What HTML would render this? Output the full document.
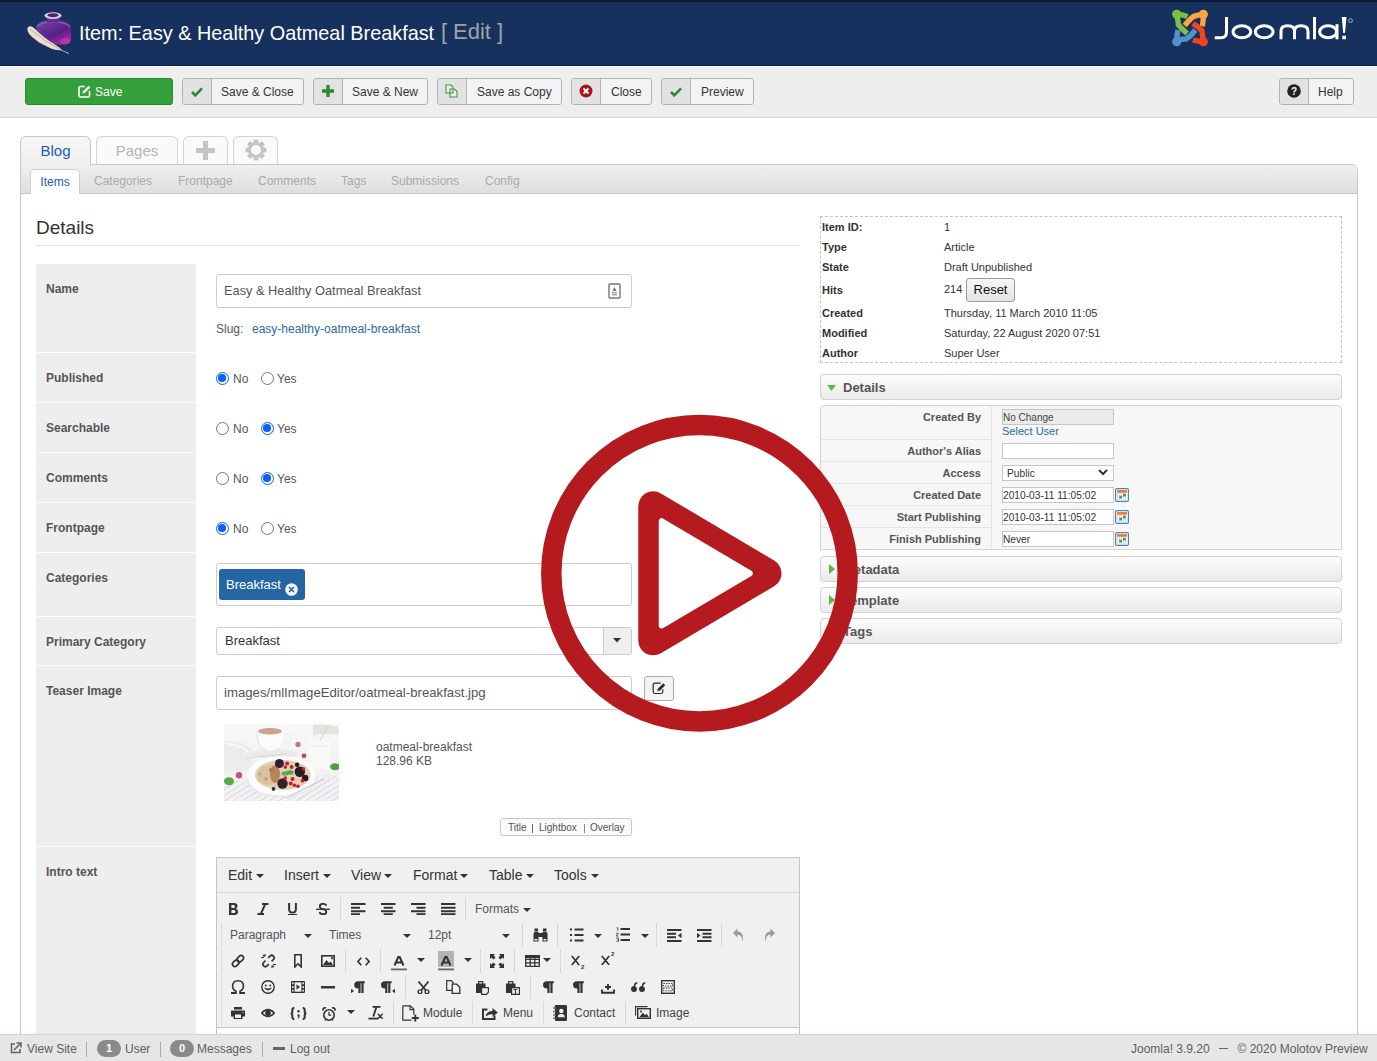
<!DOCTYPE html>
<html><head><meta charset="utf-8">
<style>
*{box-sizing:border-box;margin:0;padding:0}
html,body{width:1377px;height:1061px;overflow:hidden;background:#fff;font-family:"Liberation Sans",sans-serif;color:#333;font-size:13px}
.a{position:absolute}
#hdr{left:0;top:0;width:1377px;height:66px;background:#16315d;border-top:2px solid #0d1a33;border-bottom:1px solid #0c2252}
#ttl{left:79px;top:18.5px;font-size:19.85px;color:#fff;white-space:nowrap;line-height:28px}
.ed{top:17.5px;font-size:22px;line-height:28px;color:#a2a2a2;white-space:nowrap}
#tb{left:0;top:66px;width:1377px;height:52px;background:#eee;border-top:1px solid #fafafa;border-bottom:1px solid #d6d6d6}
.btn{position:absolute;top:78px;height:27px;background:#f3f3f3;border:1px solid #b3b3b3;border-radius:3px;font-size:12px;line-height:25px;color:#333;white-space:nowrap}
.btn .ic{position:absolute;left:0;top:0;width:29px;height:25px;background:#e2e2e2;border-right:1px solid #b3b3b3;border-radius:3px 0 0 3px}
.btn .tx{position:absolute;top:1px}
#save{left:25px;width:148px;background:#34a03a;border-color:#2a8a30;color:#fff}
/* tabs */
.tab{position:absolute;top:136px;height:29px;border:1px solid #d4d4d4;border-bottom:none;border-radius:6px 6px 0 0;background:#fafafa;font-size:15px;color:#b5b5b5;text-align:center;line-height:28px}
#cont{left:20px;top:164px;width:1338px;height:900px;border:1px solid #c8c8c8;border-radius:0 6px 0 0}
#subbar{left:21px;top:165px;width:1336px;height:29px;background:linear-gradient(#efefef,#dedede);border-bottom:1px solid #c8c8c8;border-radius:0 5px 0 0}
.st{position:absolute;top:174px;font-size:12px;color:#aaa;white-space:nowrap}
#items{left:30px;top:169px;width:50px;height:25px;background:#fff;border:1px solid #cfcfcf;border-bottom:none;border-radius:5px 5px 0 0;color:#1e5bbd;font-size:12px;text-align:center;line-height:24px}
#dh{left:36px;top:217px;font-size:19px;color:#333}
#hr{left:36px;top:245px;width:764px;height:1px;background:#e0e0e0}
.lb{position:absolute;left:36px;width:160px;background:#eee}
.lt{position:absolute;left:46px;font-size:12px;font-weight:bold;color:#555;white-space:nowrap}
.inp{position:absolute;left:216px;width:416px;border:1px solid #ccc;border-radius:3px;background:#fff}
.rad{position:absolute;width:13px;height:13px;border:1px solid #767676;border-radius:50%;background:#fff}
.rad.on{border:1.5px solid #0b62f5}
.rad.on::after{content:"";position:absolute;left:1.25px;top:1.25px;width:7.5px;height:7.5px;border-radius:50%;background:#0b62f5}
.rt{position:absolute;font-size:12px;color:#555}

.bar{position:absolute;left:820px;width:522px;height:26px;border:1px solid #d2d2d2;border-radius:4px;background:linear-gradient(#fdfdfd,#eaeaea);font-size:13px;font-weight:bold;color:#555;white-space:nowrap}
.dl{position:absolute;margin-top:1px;left:830px;width:151px;text-align:right;font-size:11px;font-weight:bold;color:#555;white-space:nowrap}
.di{position:absolute;left:1002px;width:112px;height:16px;border:1px solid #c6c6c6;background:#fff;font-size:10.2px;color:#333;line-height:16px;white-space:nowrap;overflow:hidden}
.il{position:absolute;left:822px;font-size:11px;font-weight:bold;color:#333;line-height:20px;white-space:nowrap}
.iv{position:absolute;left:944px;font-size:11px;color:#333;line-height:20px;white-space:nowrap}

.mb{position:absolute;top:867px;font-size:14px;color:#333;white-space:nowrap}
.cr{position:absolute;width:8px;height:4px;border-left:4px solid transparent;border-right:4px solid transparent;border-top:4px solid #333}
.sp{position:absolute;width:1px;height:24px;background:#d9d9d9}
.ts{position:absolute;font-size:12px;color:#555;white-space:nowrap}
.ft{position:absolute;top:1041.5px;font-size:12px;color:#5e5e5e;white-space:nowrap}
.bdg{position:absolute;top:1040px;width:24px;height:17px;border-radius:9px;background:#8a8a8a;color:#fff;font-size:11px;font-weight:bold;text-align:center;line-height:17px}
.cal{position:absolute;left:1115px;width:14px;height:14px;line-height:0}
</style></head><body>
<div id="hdr" class="a"></div>
<div id="ttl" class="a">Item: Easy &amp; Healthy Oatmeal Breakfast</div><div class="a ed" style="left:441px">[</div><div class="a ed" style="left:453px">Edit</div><div class="a ed" style="left:497px">]</div>
<div id="tb" class="a"></div>
<div class="btn" id="save"><span class="tx" style="left:69px">Save</span></div>
<div class="btn" style="left:182px;width:122px"><div class="ic"></div><span class="tx" style="left:38px">Save &amp; Close</span></div>
<div class="btn" style="left:313px;width:115px"><div class="ic"></div><span class="tx" style="left:38px">Save &amp; New</span></div>
<div class="btn" style="left:437px;width:125px"><div class="ic"></div><span class="tx" style="left:39px">Save as Copy</span></div>
<div class="btn" style="left:571px;width:81px"><div class="ic"></div><span class="tx" style="left:39px">Close</span></div>
<div class="btn" style="left:661px;width:93px"><div class="ic"></div><span class="tx" style="left:39px">Preview</span></div>
<div class="btn" style="left:1279px;width:75px"><div class="ic"></div><span class="tx" style="left:38px">Help</span></div>

<!-- tabs -->
<div id="cont" class="a"></div>
<div id="subbar" class="a"></div>
<div class="tab" style="left:20px;width:71px;background:linear-gradient(#f7f7f7,#efefef);color:#1e5bbd;border-color:#c8c8c8;height:30px">Blog</div>
<div class="tab" style="left:96px;width:82px;height:28px">Pages</div>
<div class="tab" style="left:183px;width:45px;height:28px"></div>
<div class="tab" style="left:233px;width:45px;height:28px"></div>
<div id="items" class="a">Items</div>
<div class="st" style="left:94px">Categories</div>
<div class="st" style="left:178px">Frontpage</div>
<div class="st" style="left:258px">Comments</div>
<div class="st" style="left:341px">Tags</div>
<div class="st" style="left:391px">Submissions</div>
<div class="st" style="left:485px">Config</div>

<div id="dh" class="a">Details</div>
<div id="hr" class="a"></div>

<!-- form rows -->
<div class="lb" style="top:264px;height:88px"></div>
<div class="lb" style="top:353px;height:49px"></div>
<div class="lb" style="top:403px;height:49px"></div>
<div class="lb" style="top:453px;height:49px"></div>
<div class="lb" style="top:503px;height:49px"></div>
<div class="lb" style="top:553px;height:63px"></div>
<div class="lb" style="top:617px;height:48px"></div>
<div class="lb" style="top:666px;height:180px"></div>
<div class="lb" style="top:847px;height:220px"></div>
<div class="lt" style="top:282px">Name</div>
<div class="lt" style="top:371px">Published</div>
<div class="lt" style="top:421px">Searchable</div>
<div class="lt" style="top:471px">Comments</div>
<div class="lt" style="top:521px">Frontpage</div>
<div class="lt" style="top:571px">Categories</div>
<div class="lt" style="top:635px">Primary Category</div>
<div class="lt" style="top:684px">Teaser Image</div>
<div class="lt" style="top:865px">Intro text</div>

<div class="inp" style="top:274px;height:34px"></div>

<!-- name field -->
<div class="a" style="left:224px;top:283px;font-size:12.8px;color:#555;white-space:nowrap">Easy &amp; Healthy Oatmeal Breakfast</div>
<svg class="a" style="left:608px;top:283px" width="13" height="16" viewBox="0 0 13 16"><rect x="1" y="1" width="11" height="14" rx="1" fill="none" stroke="#777" stroke-width="1.4"/><path d="M6.5 4 L8.5 8 H4.5 Z" fill="#777"/><rect x="4" y="9" width="5" height="1.3" fill="#999"/><rect x="4" y="11" width="5" height="1.3" fill="#999"/></svg>
<div class="a" style="left:216px;top:322px;font-size:12px;color:#555;white-space:nowrap">Slug:</div>
<div class="a" style="left:252px;top:322px;font-size:12px;color:#2a6ba5;white-space:nowrap">easy-healthy-oatmeal-breakfast</div>
<!-- radios -->
<div class="rad on" style="left:216px;top:372px"></div><div class="rt" style="left:233px;top:372px">No</div>
<div class="rad" style="left:261px;top:372px"></div><div class="rt" style="left:277px;top:372px">Yes</div>
<div class="rad" style="left:216px;top:422px"></div><div class="rt" style="left:233px;top:422px">No</div>
<div class="rad on" style="left:261px;top:422px"></div><div class="rt" style="left:277px;top:422px">Yes</div>
<div class="rad" style="left:216px;top:472px"></div><div class="rt" style="left:233px;top:472px">No</div>
<div class="rad on" style="left:261px;top:472px"></div><div class="rt" style="left:277px;top:472px">Yes</div>
<div class="rad on" style="left:216px;top:522px"></div><div class="rt" style="left:233px;top:522px">No</div>
<div class="rad" style="left:261px;top:522px"></div><div class="rt" style="left:277px;top:522px">Yes</div>
<!-- categories -->
<div class="inp" style="top:563px;height:43px"></div>
<div class="a" style="left:219px;top:569px;width:86px;height:31px;background:#2466a3;border-radius:3px"></div>
<div class="a" style="left:226px;top:577px;font-size:13px;color:#fff;white-space:nowrap">Breakfast</div>
<svg class="a" style="left:285px;top:583px" width="13" height="13" viewBox="0 0 13 13"><circle cx="6.5" cy="6.5" r="6.3" fill="#f4f4f4"/><path d="M4 4 L9 9 M9 4 L4 9" stroke="#2466a3" stroke-width="1.5"/></svg>
<!-- primary category -->
<div class="inp" style="top:627px;height:28px"></div>
<div class="a" style="left:603px;top:628px;width:28px;height:26px;background:#eee;border-left:1px solid #ccc;border-radius:0 3px 3px 0"></div>
<svg class="a" style="left:613px;top:638px" width="8" height="5" viewBox="0 0 8 5"><path d="M0 0 H8 L4 4.5 Z" fill="#333"/></svg>
<div class="a" style="left:225px;top:633px;font-size:13px;color:#333;white-space:nowrap">Breakfast</div>
<!-- teaser -->
<div class="inp" style="top:676px;height:34px"></div>
<div class="a" style="left:224px;top:685px;font-size:13.2px;color:#555;white-space:nowrap">images/mlImageEditor/oatmeal-breakfast.jpg</div>
<div class="a" style="left:644px;top:676px;width:30px;height:25px;background:#f3f3f3;border:1px solid #adadad;border-radius:3px"></div>
<svg class="a" style="left:652px;top:682px" width="14" height="13" viewBox="0 0 14 13"><path d="M8.8 1.2H3Q1.2 1.2 1.2 3V9.7Q1.2 11.5 3 11.5H9Q10.8 11.5 10.8 9.7V7.3" fill="none" stroke="#2a2a2a" stroke-width="1.2"/><path d="M5.3 9.3L5.6 7L11.3 1.3L13.2 3.2L7.5 8.9Z" fill="#2a2a2a"/><path d="M5.8 8.8L6 7.6L6.9 8.5Z" fill="#eee"/></svg>
<div class="a" style="left:376px;top:740px;font-size:12px;color:#555;line-height:14px;white-space:nowrap">oatmeal-breakfast<br>128.96 KB</div>
<div class="a" style="left:500px;top:818px;width:132px;height:18px;border:1px solid #c8c8c8;border-radius:3px;background:#fafafa"></div>
<div class="a" style="left:508px;top:822px;font-size:10px;color:#555;white-space:nowrap">Title</div>
<div class="a" style="left:532px;top:824px;width:1px;height:9px;background:#666"></div>
<div class="a" style="left:539px;top:822px;font-size:10px;color:#555;white-space:nowrap">Lightbox</div>
<div class="a" style="left:584px;top:824px;width:1px;height:9px;background:#888"></div>
<div class="a" style="left:590px;top:822px;font-size:10px;color:#555;white-space:nowrap">Overlay</div>

<!-- right info box -->
<div class="a" style="left:820px;top:216px;width:522px;height:147px;border:1px dashed #c4c4c4"></div>
<div class="il" style="top:217px">Item ID:</div><div class="iv" style="top:217px">1</div>
<div class="il" style="top:237px">Type</div><div class="iv" style="top:237px">Article</div>
<div class="il" style="top:257px">State</div><div class="iv" style="top:257px">Draft Unpublished</div>
<div class="il" style="top:280px">Hits</div><div class="iv" style="top:279px">214</div>
<div class="il" style="top:303px">Created</div><div class="iv" style="top:303px">Thursday, 11 March 2010 11:05</div>
<div class="il" style="top:323px">Modified</div><div class="iv" style="top:323px">Saturday, 22 August 2020 07:51</div>
<div class="il" style="top:343px">Author</div><div class="iv" style="top:343px">Super User</div>
<div class="a" style="left:966px;top:278px;width:49px;height:24px;background:linear-gradient(#f6f6f6,#e4e4e4);border:1px solid #9a9a9a;border-radius:3px;font-size:13px;color:#111;text-align:center;line-height:22px">Reset</div>
<!-- accordion -->
<div class="bar" style="top:374px"><svg class="a" style="left:6px;top:10px" width="9" height="6" viewBox="0 0 9 6"><path d="M0 0H9L4.5 6Z" fill="#5fb843"/></svg><span class="a" style="left:22px;top:5px">Details</span></div>
<div class="a" style="left:820px;top:405px;width:522px;height:145px;border:1px solid #d2d2d2;border-radius:4px 4px 0 0;background:#f7f7f7"></div>
<div class="a" style="left:991px;top:406px;width:1px;height:143px;background:#e4e4e4"></div>
<div class="a" style="left:821px;top:439px;width:170px;height:1px;background:#e4e4e4"></div>
<div class="a" style="left:821px;top:461px;width:170px;height:1px;background:#e4e4e4"></div>
<div class="a" style="left:821px;top:483px;width:170px;height:1px;background:#e4e4e4"></div>
<div class="a" style="left:821px;top:505px;width:170px;height:1px;background:#e4e4e4"></div>
<div class="a" style="left:821px;top:527px;width:170px;height:1px;background:#e4e4e4"></div>
<div class="dl" style="top:410px">Created By</div>
<div class="dl" style="top:444px">Author's Alias</div>
<div class="dl" style="top:466px">Access</div>
<div class="dl" style="top:488px">Created Date</div>
<div class="dl" style="top:510px">Start Publishing</div>
<div class="dl" style="top:532px">Finish Publishing</div>
<div class="di" style="top:409px;background:#ebebeb;font-size:10px;color:#444">No Change</div>
<div class="a" style="left:1002px;top:425px;font-size:11px;color:#2a6ba5;white-space:nowrap">Select User</div>
<div class="di" style="top:443px"></div>
<div class="di" style="top:465px;padding-left:4px">Public</div>
<svg class="a" style="left:1098px;top:469px" width="10" height="7" viewBox="0 0 10 7"><path d="M1 1L5 5L9 1" fill="none" stroke="#333" stroke-width="2"/></svg>
<div class="di" style="top:487px">2010-03-11 11:05:02</div>
<div class="di" style="top:509px">2010-03-11 11:05:02</div>
<div class="di" style="top:531px">Never</div>
<div class="cal" style="top:488px"><svg width="14" height="14" viewBox="0 0 14 14"><rect x="0.6" y="0.6" width="12.8" height="12.8" rx="1.2" fill="#fff" stroke="#4a80c8" stroke-width="1.2"/><rect x="2" y="2" width="10" height="2.8" rx="0.6" fill="#f47a30"/><path d="M2.5 5.5V12M4.5 5.5V12M6.5 5.5V12M8.5 5.5V12M10.5 5.5V12M2 6H12M2 8H12M2 10H12M2 12H12" stroke="#a9c4ec" stroke-width="0.8" stroke-dasharray="1 1"/><rect x="4.3" y="7.7" width="2.8" height="2.8" fill="#4a9e4a"/><rect x="8" y="5.7" width="2.8" height="2.8" fill="#4a9e4a"/></svg></div>
<div class="cal" style="top:510px"><svg width="14" height="14" viewBox="0 0 14 14"><rect x="0.6" y="0.6" width="12.8" height="12.8" rx="1.2" fill="#fff" stroke="#4a80c8" stroke-width="1.2"/><rect x="2" y="2" width="10" height="2.8" rx="0.6" fill="#f47a30"/><path d="M2.5 5.5V12M4.5 5.5V12M6.5 5.5V12M8.5 5.5V12M10.5 5.5V12M2 6H12M2 8H12M2 10H12M2 12H12" stroke="#a9c4ec" stroke-width="0.8" stroke-dasharray="1 1"/><rect x="4.3" y="7.7" width="2.8" height="2.8" fill="#4a9e4a"/><rect x="8" y="5.7" width="2.8" height="2.8" fill="#4a9e4a"/></svg></div>
<div class="cal" style="top:532px"><svg width="14" height="14" viewBox="0 0 14 14"><rect x="0.6" y="0.6" width="12.8" height="12.8" rx="1.2" fill="#fff" stroke="#4a80c8" stroke-width="1.2"/><rect x="2" y="2" width="10" height="2.8" rx="0.6" fill="#f47a30"/><path d="M2.5 5.5V12M4.5 5.5V12M6.5 5.5V12M8.5 5.5V12M10.5 5.5V12M2 6H12M2 8H12M2 10H12M2 12H12" stroke="#a9c4ec" stroke-width="0.8" stroke-dasharray="1 1"/><rect x="4.3" y="7.7" width="2.8" height="2.8" fill="#4a9e4a"/><rect x="8" y="5.7" width="2.8" height="2.8" fill="#4a9e4a"/></svg></div>
<div class="bar" style="top:556px"><svg class="a" style="left:8px;top:7px" width="6" height="10" viewBox="0 0 6 10"><path d="M0 0V10L6 5Z" fill="#5fb843"/></svg><span class="a" style="left:22px;top:5px">Metadata</span></div>
<div class="bar" style="top:587px"><svg class="a" style="left:8px;top:7px" width="6" height="10" viewBox="0 0 6 10"><path d="M0 0V10L6 5Z" fill="#5fb843"/></svg><span class="a" style="left:22px;top:5px">Template</span></div>
<div class="bar" style="top:618px"><svg class="a" style="left:8px;top:7px" width="6" height="10" viewBox="0 0 6 10"><path d="M0 0V10L6 5Z" fill="#5fb843"/></svg><span class="a" style="left:22px;top:5px">Tags</span></div>

<!-- editor -->
<div class="a" style="left:216px;top:857px;width:584px;height:200px;border:1px solid #c5c5c5;background:#f0f0f0"></div>
<div class="a" style="left:217px;top:892px;width:582px;height:1px;background:#d9d9d9"></div>
<div class="a" style="left:217px;top:1027px;width:582px;height:1px;background:#c5c5c5"></div>
<div class="a" style="left:217px;top:1028px;width:582px;height:30px;background:#fff"></div>
<div class="mb" style="left:228px">Edit</div><div class="cr" style="left:256px;top:874px"></div>
<div class="mb" style="left:284px">Insert</div><div class="cr" style="left:323px;top:874px"></div>
<div class="mb" style="left:351px">View</div><div class="cr" style="left:384px;top:874px"></div>
<div class="mb" style="left:413px">Format</div><div class="cr" style="left:460px;top:874px"></div>
<div class="mb" style="left:489px">Table</div><div class="cr" style="left:526px;top:874px"></div>
<div class="mb" style="left:554px">Tools</div><div class="cr" style="left:591px;top:874px"></div>
<div class="sp" style="left:340px;top:897px"></div>
<div class="sp" style="left:465px;top:897px"></div>
<div class="sp" style="left:221px;top:923px"></div>
<div class="sp" style="left:522px;top:923px"></div>
<div class="sp" style="left:557px;top:923px"></div>
<div class="sp" style="left:656px;top:923px"></div>
<div class="sp" style="left:721px;top:923px"></div>
<div class="sp" style="left:221px;top:949px"></div>
<div class="sp" style="left:345px;top:949px"></div>
<div class="sp" style="left:380px;top:949px"></div>
<div class="sp" style="left:480px;top:949px"></div>
<div class="sp" style="left:514px;top:949px"></div>
<div class="sp" style="left:560px;top:949px"></div>
<div class="sp" style="left:221px;top:975px"></div>
<div class="sp" style="left:405px;top:975px"></div>
<div class="sp" style="left:530px;top:975px"></div>
<div class="sp" style="left:221px;top:1001px"></div>
<div class="sp" style="left:393px;top:1001px"></div>
<div class="sp" style="left:472px;top:1001px"></div>
<div class="sp" style="left:543px;top:1001px"></div>
<div class="sp" style="left:625px;top:1001px"></div>
<svg class="a" style="left:228.5px;top:903px" width="9" height="12" viewBox="0 0 9 12"><path fill-rule="evenodd" fill="#333" d="M0 0H5Q8.5 0 8.5 3Q8.5 4.9 6.9 5.7Q9 6.4 9 8.8Q9 12 5.3 12H0Z M2.4 2V5H4.7Q6 5 6 3.5Q6 2 4.7 2Z M2.4 7V10H5Q6.5 10 6.5 8.5Q6.5 7 5 7Z"/></svg>
<svg class="a" style="left:256.5px;top:903px" width="12" height="12" viewBox="0 0 12 12"><path d="M5 1H11.5M0.5 11H7M8.3 1L3.8 11" stroke="#333" stroke-width="1.9" fill="none"/></svg>
<svg class="a" style="left:288px;top:903px" width="9" height="12" viewBox="0 0 9 12"><path d="M1.1 0V6Q1.1 9.6 4.5 9.6Q7.9 9.6 7.9 6V0" stroke="#333" stroke-width="2" fill="none"/><rect x="0" y="11" width="9" height="1.2" fill="#333"/></svg>
<svg class="a" style="left:316px;top:903px" width="14" height="12" viewBox="0 0 14 12"><path d="M10.5 2.6Q9.5 0.8 7 0.8Q3.8 0.8 3.8 3.4Q3.8 5.4 7 6.2Q10.3 7 10.3 9Q10.3 11.2 7 11.2Q4.2 11.2 3.4 9.2" stroke="#333" stroke-width="1.8" fill="none"/><rect x="0" y="5.6" width="14" height="1.3" fill="#333"/></svg>
<svg class="a" style="left:351px;top:903px" width="15" height="12" viewBox="0 0 15 12"><path d="M0 1H14.5M0 4.7H9M0 8.3H14.5M0 11.3H9" stroke="#333" stroke-width="1.9"/></svg>
<svg class="a" style="left:381px;top:903px" width="15" height="12" viewBox="0 0 15 12"><path d="M0 1H14.5M2.7 4.7H11.8M0 8.3H14.5M2.7 11.3H11.8" stroke="#333" stroke-width="1.9"/></svg>
<svg class="a" style="left:411px;top:903px" width="15" height="12" viewBox="0 0 15 12"><path d="M0 1H14.5M5.5 4.7H14.5M0 8.3H14.5M5.5 11.3H14.5" stroke="#333" stroke-width="1.9"/></svg>
<svg class="a" style="left:441px;top:903px" width="15" height="12" viewBox="0 0 15 12"><path d="M0 1H14.5M0 4.7H14.5M0 8.3H14.5M0 11.3H14.5" stroke="#333" stroke-width="1.9"/></svg>
<div class="ts" style="left:475px;top:902px">Formats</div><div class="cr" style="left:523px;top:908px"></div>
<div class="ts" style="left:230px;top:928px">Paragraph</div><div class="cr" style="left:304px;top:934px"></div>
<div class="ts" style="left:329px;top:928px">Times</div><div class="cr" style="left:403px;top:934px"></div>
<div class="ts" style="left:428px;top:928px">12pt</div><div class="cr" style="left:502px;top:934px"></div>
<svg class="a" style="left:532.5px;top:928px" width="15" height="14" viewBox="0 0 15 14"><path fill="#333" d="M0.5 6Q0.5 4 2 4H5.5V13.5H0.5Z M9.5 4H13Q14.5 4 14.5 6V13.5H9.5Z M1.5 0.5H5V3.5H1.5Z M10 0.5H13.5V3.5H10Z M5.5 5H9.5V9H5.5Z"/><rect x="1.5" y="11" width="3" height="1.5" fill="#f0f0f0"/><rect x="10.5" y="11" width="3" height="1.5" fill="#f0f0f0"/></svg>
<svg class="a" style="left:570px;top:928px" width="14" height="14" viewBox="0 0 14 14"><path d="M0 1.5H2M4.5 1.5H13.5M0 7H2M4.5 7H13.5M0 12.5H2M4.5 12.5H13.5" stroke="#333" stroke-width="1.9"/></svg>
<div class="cr" style="left:594px;top:934px"></div>
<svg class="a" style="left:616px;top:927px" width="14" height="15" viewBox="0 0 14 15"><path d="M4.5 2H14M4.5 7.5H14M4.5 13H14" stroke="#333" stroke-width="1.9"/><path d="M0.5 0.8H1.8V4 M0 6.3H2.5L0 9H2.5 M0 11H2.5V15H0 M0.8 13H2.5" stroke="#333" stroke-width="0.8" fill="none"/></svg>
<div class="cr" style="left:641px;top:934px"></div>
<svg class="a" style="left:667px;top:929px" width="15" height="13" viewBox="0 0 15 13"><path d="M0 1H14.5M0 4.7H9M0 8.3H9M0 12H14.5" stroke="#333" stroke-width="1.9"/><path d="M14.5 3.7L11 6.5L14.5 9.3Z" fill="#333"/></svg>
<svg class="a" style="left:697px;top:929px" width="15" height="13" viewBox="0 0 15 13"><path d="M0 1H14.5M5.5 4.7H14.5M5.5 8.3H14.5M0 12H14.5" stroke="#333" stroke-width="1.9"/><path d="M0 3.7L3.5 6.5L0 9.3Z" fill="#333"/></svg>
<svg class="a" style="left:733px;top:928px" width="11" height="14" viewBox="0 0 11 14"><path d="M4.5 0.5L0 5L4.5 9.5V6.5Q9 6.5 9.5 13.5Q11.5 4 4.5 3.5Z" fill="#9a9a9a"/></svg>
<svg class="a" style="left:764px;top:928px" width="11" height="14" viewBox="0 0 11 14"><path d="M6.5 0.5L11 5L6.5 9.5V6.5Q2 6.5 1.5 13.5Q-0.5 4 6.5 3.5Z" fill="#9a9a9a"/></svg>
<svg class="a" style="left:231px;top:954px" width="14" height="14" viewBox="0 0 14 14"><g transform="rotate(-45 7 7)" fill="none" stroke="#333" stroke-width="1.7"><rect x="0.2" y="4.6" width="7.2" height="4.8" rx="2.4"/><rect x="6.6" y="4.6" width="7.2" height="4.8" rx="2.4"/></g></svg>
<svg class="a" style="left:260.5px;top:954px" width="15" height="14" viewBox="0 0 15 14"><g transform="rotate(-45 7.5 7)" fill="none" stroke="#333" stroke-width="1.7"><path d="M5.5 4.6H3Q0.6 4.6 0.6 7Q0.6 9.4 3 9.4H5.5 M9.5 4.6H12Q14.4 4.6 14.4 7Q14.4 9.4 12 9.4H9.5"/></g><path d="M0 3.5H3M4 0V2.5M2 1L3.5 2.5 M15 10.5H12M11 14V11.5M13 13L11.5 11.5" stroke="#333" stroke-width="1.1"/></svg>
<svg class="a" style="left:294px;top:954px" width="8" height="14" viewBox="0 0 8 14"><path d="M0.8 0.8H7.2V13L4 9.8L0.8 13Z" fill="none" stroke="#333" stroke-width="1.6"/></svg>
<svg class="a" style="left:321px;top:955px" width="14" height="12" viewBox="0 0 14 12"><rect x="0.8" y="0.8" width="12.4" height="10.4" fill="none" stroke="#333" stroke-width="1.6"/><path d="M2 10L5.5 5L8 8L9.8 6.5L12 10Z" fill="#333"/><circle cx="11" cy="3.2" r="1.1" fill="#333"/></svg>
<svg class="a" style="left:357px;top:956.5px" width="13" height="9" viewBox="0 0 13 9"><path d="M4.3 0.7L0.9 4.5L4.3 8.3M8.7 0.7L12.1 4.5L8.7 8.3" fill="none" stroke="#333" stroke-width="1.7"/></svg>
<svg class="a" style="left:391px;top:955.5px" width="16" height="15" viewBox="0 0 16 15"><path d="M3.5 9.5L7.5 0.5H8.5L12.5 9.5 M5.3 6.5H10.7" fill="none" stroke="#333" stroke-width="2"/><rect x="0" y="12.5" width="16" height="1.8" fill="#666"/></svg>
<div class="cr" style="left:417px;top:958px"></div>
<div class="a" style="left:438px;top:951px;width:16px;height:16px;background:#b4b4b4"></div>
<svg class="a" style="left:438px;top:955.5px" width="16" height="15" viewBox="0 0 16 15"><path d="M3.5 9.5L7.5 0.5H8.5L12.5 9.5 M5.3 6.5H10.7" fill="none" stroke="#333" stroke-width="2"/><rect x="0" y="12.5" width="16" height="1.8" fill="#666"/></svg>
<div class="cr" style="left:464px;top:958px"></div>
<svg class="a" style="left:490px;top:954px" width="14" height="14" viewBox="0 0 14 14"><path fill="#333" d="M0 0H5L3.6 1.4L5.6 3.4L3.4 5.6L1.4 3.6L0 5Z M14 0V5L12.6 3.6L10.6 5.6L8.4 3.4L10.4 1.4L9 0Z M0 14V9L1.4 10.4L3.4 8.4L5.6 10.6L3.6 12.6L5 14Z M14 14H9L10.4 12.6L8.4 10.6L10.6 8.4L12.6 10.4L14 9Z"/></svg>
<svg class="a" style="left:524.5px;top:955px" width="15" height="12" viewBox="0 0 15 12"><path d="M0.7 0.7H14.3V11.3H0.7Z M0.7 4.3H14.3M0.7 7.8H14.3M5.2 3V11.3M9.8 3V11.3" fill="none" stroke="#333" stroke-width="1.3"/><rect x="0" y="0" width="15" height="3" fill="#333"/></svg>
<div class="cr" style="left:543px;top:958px"></div>
<svg class="a" style="left:570.5px;top:955px" width="15" height="14" viewBox="0 0 15 14"><path d="M0.8 1L8.2 10M8.2 1L0.8 10" stroke="#333" stroke-width="1.7"/><text x="10" y="13.5" font-size="6" fill="#333" font-family="Liberation Sans" font-weight="bold">2</text></svg>
<svg class="a" style="left:600.5px;top:950px" width="15" height="15" viewBox="0 0 15 15"><path d="M0.8 6L8.2 15M8.2 6L0.8 15" stroke="#333" stroke-width="1.7"/><text x="10" y="5.5" font-size="6" fill="#333" font-family="Liberation Sans" font-weight="bold">2</text></svg>
<svg class="a" style="left:231px;top:980px" width="14" height="14" viewBox="0 0 14 14"><path d="M1 13.2H5V11.3Q1.6 9.6 1.6 6Q1.6 0.8 7 0.8Q12.4 0.8 12.4 6Q12.4 9.6 9 11.3V13.2H13" fill="none" stroke="#333" stroke-width="1.6"/><rect x="0" y="12" width="5" height="2" fill="#333"/><rect x="9" y="12" width="5" height="2" fill="#333"/></svg>
<svg class="a" style="left:261px;top:980px" width="14" height="14" viewBox="0 0 14 14"><circle cx="7" cy="7" r="6.2" fill="none" stroke="#333" stroke-width="1.4"/><circle cx="4.8" cy="5.4" r="1" fill="#333"/><circle cx="9.2" cy="5.4" r="1" fill="#333"/><path d="M3.6 8.2Q7 11.8 10.4 8.2Q7 9.6 3.6 8.2Z" fill="#333" stroke="#333" stroke-width="0.8"/></svg>
<svg class="a" style="left:291px;top:981px" width="14" height="12" viewBox="0 0 14 12"><rect x="0" y="0" width="14" height="12" rx="1" fill="#333"/><rect x="3.6" y="1.3" width="6.8" height="9.4" fill="#f0f0f0"/><path d="M1 1.5H2.6V3.2H1Z M1 5.2H2.6V6.9H1Z M1 8.8H2.6V10.5H1Z M11.4 1.5H13V3.2H11.4Z M11.4 5.2H13V6.9H11.4Z M11.4 8.8H13V10.5H11.4Z" fill="#f0f0f0"/><path d="M5.5 3.2L9 6L5.5 8.8Z" fill="#333"/></svg>
<svg class="a" style="left:321px;top:985.5px" width="14" height="3" viewBox="0 0 14 3"><rect x="0" y="0" width="14" height="2.5" fill="#333"/></svg>
<svg class="a" style="left:350.5px;top:981px" width="14" height="12" viewBox="0 0 14 12"><path d="M7.2 0.3H13.8V2.2H12.6V12H10.4V2.2H9.6V12H7.4V7.4Q3.2 7.4 3.2 3.9Q3.2 0.3 7.2 0.3Z" fill="#333"/><path d="M0 7.8L3 10L0 12.2Z" fill="#333"/></svg>
<svg class="a" style="left:381px;top:981px" width="14" height="12" viewBox="0 0 14 12"><path d="M4 0.3H10.6V2.2H9.4V12H7.2V2.2H6.4V12H4.2V7.4Q0 7.4 0 3.9Q0 0.3 4 0.3Z" fill="#333"/><path d="M14 7.8L11 10L14 12.2Z" fill="#333"/></svg>
<svg class="a" style="left:416.5px;top:981px" width="13" height="13" viewBox="0 0 13 13"><path d="M1.5 0.5L8.5 9M11.5 0.5L4.5 9" stroke="#333" stroke-width="1.8"/><circle cx="3" cy="10.8" r="1.9" fill="none" stroke="#333" stroke-width="1.4"/><circle cx="10" cy="10.8" r="1.9" fill="none" stroke="#333" stroke-width="1.4"/></svg>
<svg class="a" style="left:446px;top:980px" width="15" height="14" viewBox="0 0 15 14"><path d="M0.7 0.7H5.2L7.3 2.8V10.3H0.7Z" fill="#f0f0f0" stroke="#333" stroke-width="1.2"/><path d="M6.2 4.2H10.7L13.8 7.3V13.3H6.2Z" fill="#f0f0f0" stroke="#333" stroke-width="1.3"/></svg>
<svg class="a" style="left:476px;top:980.5px" width="13" height="14" viewBox="0 0 13 14"><path d="M0 2.5H9.5V6H5V12H0Z" fill="#333"/><rect x="2.7" y="0.6" width="4" height="3" fill="none" stroke="#333" stroke-width="1.2"/><path d="M5.6 6.6H12.4V11.2L10.5 13.4H5.6Z" fill="#f0f0f0" stroke="#333" stroke-width="1.2"/></svg>
<svg class="a" style="left:506px;top:980.5px" width="14" height="14" viewBox="0 0 14 14"><path d="M0 2.5H9.5V6H5V12H0Z" fill="#333"/><rect x="2.7" y="0.6" width="4" height="3" fill="none" stroke="#333" stroke-width="1.2"/><path d="M5.6 6.6H13.4V13.4H5.6Z" fill="#f0f0f0" stroke="#333" stroke-width="1.2"/><path d="M7.5 8.4H11.5M9.5 8.4V12.2M8.6 12.2H10.4" stroke="#333" stroke-width="1"/></svg>
<svg class="a" style="left:542.5px;top:981px" width="11" height="12" viewBox="0 0 11 12"><path d="M4 0.3H10.8V2.2H9.6V12H7.4V2.2H6.6V12H4.4V7.4Q0 7.4 0 3.9Q0 0.3 4 0.3Z" fill="#333"/></svg>
<svg class="a" style="left:572.5px;top:981px" width="11" height="12" viewBox="0 0 11 12"><path d="M4 0.3H10.8V2.2H9.6V12H7.4V2.2H6.6V12H4.4V7.4Q0 7.4 0 3.9Q0 0.3 4 0.3Z" fill="#333"/></svg>
<svg class="a" style="left:601px;top:983.5px" width="14" height="10" viewBox="0 0 14 10"><path d="M7 0V6M4 3H10" stroke="#333" stroke-width="1.9"/><path d="M1 5.5V8.8H13V5.5" fill="none" stroke="#333" stroke-width="1.9"/></svg>
<svg class="a" style="left:631px;top:982px" width="15" height="10" viewBox="0 0 15 10"><path d="M3 3.8Q0 4.5 0 7Q0 10 3 10Q6 10 6 7Q6 4.6 4 4.2Q4.8 1.8 6.5 1.2L6 0Q2.5 0.8 3 3.8Z M11 3.8Q8 4.5 8 7Q8 10 11 10Q14 10 14 7Q14 4.6 12 4.2Q12.8 1.8 14.5 1.2L14 0Q10.5 0.8 11 3.8Z" fill="#333"/></svg>
<svg class="a" style="left:661px;top:980px" width="14" height="14" viewBox="0 0 14 14"><rect x="0.7" y="0.7" width="12.6" height="12.6" fill="none" stroke="#333" stroke-width="1.4"/><path d="M2.5 3.5H11.5V6H2.5Z M2.5 8H11.5V10.8H2.5Z" fill="none" stroke="#333" stroke-width="0.9" stroke-dasharray="1.5 1"/></svg>
<svg class="a" style="left:231px;top:1007px" width="14" height="12" viewBox="0 0 14 12"><path d="M3 0H11V2.5H3Z M0.5 3.5H13.5Q14 3.5 14 4V9.5H11.5V12H2.5V9.5H0V4Q0 3.5 0.5 3.5Z" fill="#333"/><rect x="4" y="7.5" width="6" height="3.5" fill="#f0f0f0"/><circle cx="12" cy="5.3" r="0.6" fill="#f0f0f0"/></svg>
<svg class="a" style="left:261px;top:1007.5px" width="14" height="10" viewBox="0 0 14 10"><path d="M0.7 5Q7 -2 13.3 5Q7 12 0.7 5Z" fill="none" stroke="#333" stroke-width="1.5"/><circle cx="7" cy="5" r="2.9" fill="#333"/><path d="M1.5 4Q7 -0.5 12.5 4" fill="none" stroke="#333" stroke-width="1.2"/></svg>
<svg class="a" style="left:289.5px;top:1006.5px" width="17" height="13" viewBox="0 0 17 13"><path d="M4.3 0.9Q2.3 0.9 2.3 2.7V5Q2.3 6.5 0.6 6.5Q2.3 6.5 2.3 8V10.3Q2.3 12.1 4.3 12.1 M12.7 0.9Q14.7 0.9 14.7 2.7V5Q14.7 6.5 16.4 6.5Q14.7 6.5 14.7 8V10.3Q14.7 12.1 12.7 12.1" fill="none" stroke="#333" stroke-width="2"/><circle cx="8.5" cy="4.2" r="1.2" fill="#333"/><path d="M7.5 7.5H9.6V9.5Q9.6 11 8 11.8L7.6 11.2Q8.3 10.6 8.3 9.6H7.5Z" fill="#333"/></svg>
<svg class="a" style="left:322px;top:1006.5px" width="14" height="14" viewBox="0 0 14 14"><circle cx="7" cy="8" r="5.2" fill="none" stroke="#333" stroke-width="1.6"/><path d="M7 5V8.2H9.3" fill="none" stroke="#333" stroke-width="1.3"/><path d="M0.7 3.6Q1 0.5 4 0.8M13.3 3.6Q13 0.5 10 0.8" fill="none" stroke="#333" stroke-width="1.7"/><path d="M3 13.5L4 12M11 13.5L10 12" stroke="#333" stroke-width="1.2"/></svg>
<div class="cr" style="left:347px;top:1010px"></div>
<svg class="a" style="left:367.5px;top:1005.5px" width="16" height="14" viewBox="0 0 16 14"><path d="M4.5 0.8H12.5M8.5 0.8L5.3 10.5" stroke="#333" stroke-width="1.9" fill="none"/><rect x="0.5" y="11.7" width="9.5" height="1.8" fill="#333"/><path d="M9.8 7.8L14.7 12.8M14.7 7.8L9.8 12.8" stroke="#333" stroke-width="1.4"/></svg>
<svg class="a" style="left:401.5px;top:1004.5px" width="17" height="17" viewBox="0 0 17 17"><path d="M0.8 0.8H8.3L11.8 4.3V9.5 M9.5 15.2H0.8V0.8" fill="none" stroke="#333" stroke-width="1.2"/><path d="M8 0.8V4.6H11.8" fill="none" stroke="#333" stroke-width="1.1"/><path d="M13.3 9.5V16.5M9.8 13H16.8" stroke="#333" stroke-width="1.9"/></svg>
<div class="ts" style="left:423px;top:1006px;color:#444">Module</div>
<svg class="a" style="left:482px;top:1005.5px" width="16" height="14" viewBox="0 0 16 14"><path d="M5.5 3.5H1V13H12.5V9.5" fill="none" stroke="#333" stroke-width="2"/><path d="M3.5 10.5Q4.5 5 10.5 5V2L15.8 6.5L10.5 11V8Q6.5 8 3.5 10.5Z" fill="#333"/></svg>
<div class="ts" style="left:503px;top:1006px;color:#444">Menu</div>
<svg class="a" style="left:553px;top:1004.5px" width="14" height="16" viewBox="0 0 14 16"><rect x="1.8" y="0" width="12.2" height="16" rx="1.2" fill="#333"/><path d="M0 3H3M0 6.5H3M0 10H3M0 13H3" stroke="#333" stroke-width="1.1"/><path d="M1 3H2.5M1 6.5H2.5M1 10H2.5M1 13H2.5" stroke="#f0f0f0" stroke-width="0.5"/><circle cx="8.3" cy="6" r="2.2" fill="#f0f0f0"/><path d="M4.8 12.3Q4.8 9 8.3 9Q11.8 9 11.8 12.3Z" fill="#f0f0f0"/></svg>
<div class="ts" style="left:574px;top:1006px;color:#444">Contact</div>
<svg class="a" style="left:635px;top:1005.5px" width="16" height="13" viewBox="0 0 16 13"><path d="M0.6 9.5V0.6H12.5" fill="none" stroke="#333" stroke-width="1.1"/><rect x="2.7" y="2.7" width="12.6" height="9.6" fill="#f0f0f0" stroke="#333" stroke-width="1.4"/><path d="M4.2 11.2L7.8 6.8L10.3 9.2L11.8 7.8L14 11.2Z" fill="#333"/><circle cx="6" cy="5.5" r="1" fill="#333"/></svg>
<div class="ts" style="left:656px;top:1006px;color:#444">Image</div>

<!-- footer -->
<div class="a" style="left:0;top:1030px;width:1377px;height:4px;background:linear-gradient(rgba(0,0,0,0),rgba(0,0,0,0.025))"></div><div class="a" style="left:0;top:1034px;width:1377px;height:27px;background:#e6e6e6;border-top:1px solid #d4d4d4"></div>
<svg class="a" style="left:10px;top:1042px" width="12" height="12" viewBox="0 0 12 12"><path d="M5 2H1.5V10.5H10V7" fill="none" stroke="#666" stroke-width="1.6"/><path d="M4 8L10 2M6.5 1H11V5.5" fill="none" stroke="#666" stroke-width="1.6"/></svg>
<div class="ft" style="left:27px">View Site</div>
<div class="a" style="left:86px;top:1042px;width:1px;height:15px;background:#aaa"></div>
<div class="bdg" style="left:97px">1</div>
<div class="ft" style="left:125px">User</div>
<div class="a" style="left:160px;top:1042px;width:1px;height:15px;background:#aaa"></div>
<div class="bdg" style="left:170px">0</div>
<div class="ft" style="left:197px">Messages</div>
<div class="a" style="left:262px;top:1042px;width:1px;height:15px;background:#aaa"></div>
<div class="a" style="left:273px;top:1047px;width:12px;height:3px;background:#666"></div>
<div class="ft" style="left:290px">Log out</div>
<div class="ft" style="left:1131px">Joomla! 3.9.20</div><div class="a" style="left:1219px;top:1048px;width:9px;height:1px;background:#666"></div><div class="ft" style="left:1237.5px">&copy; 2020 Molotov Preview</div>

<!-- thumbnail -->
<svg class="a" style="left:224px;top:724px" width="115" height="77" viewBox="0 0 115 77">
<defs><linearGradient id="bgg" x1="0" y1="0" x2="0" y2="1"><stop offset="0" stop-color="#f7f7f7"/><stop offset="1" stop-color="#efeff0"/></linearGradient>
<filter id="bl" x="-5%" y="-5%" width="110%" height="110%"><feGaussianBlur stdDeviation="0.5"/></filter>
<clipPath id="napk"><path d="M0 60 Q30 52 60 50 L115 46 V77 H0Z"/></clipPath></defs>
<rect width="115" height="77" fill="url(#bgg)"/>
<g filter="url(#bl)">
<path d="M0 60 Q30 52 60 50 L115 46 V77 H0Z" fill="#f1f2f5"/>
<g clip-path="url(#napk)"><path d="M-54 77 L-14 52" stroke="#dccbbd" stroke-width="0.9"/><path d="M-45 77 L-5 52" stroke="#cfd6e4" stroke-width="0.9"/><path d="M-36 77 L4 52" stroke="#dccbbd" stroke-width="0.9"/><path d="M-27 77 L13 52" stroke="#cfd6e4" stroke-width="0.9"/><path d="M-18 77 L22 52" stroke="#dccbbd" stroke-width="0.9"/><path d="M-9 77 L31 52" stroke="#cfd6e4" stroke-width="0.9"/><path d="M0 77 L40 52" stroke="#dccbbd" stroke-width="0.9"/><path d="M9 77 L49 52" stroke="#cfd6e4" stroke-width="0.9"/><path d="M18 77 L58 52" stroke="#dccbbd" stroke-width="0.9"/><path d="M27 77 L67 52" stroke="#cfd6e4" stroke-width="0.9"/><path d="M36 77 L76 52" stroke="#dccbbd" stroke-width="0.9"/><path d="M45 77 L85 52" stroke="#cfd6e4" stroke-width="0.9"/><path d="M54 77 L94 52" stroke="#dccbbd" stroke-width="0.9"/><path d="M63 77 L103 52" stroke="#cfd6e4" stroke-width="0.9"/><path d="M72 77 L112 52" stroke="#dccbbd" stroke-width="0.9"/><path d="M81 77 L121 52" stroke="#cfd6e4" stroke-width="0.9"/><path d="M90 77 L130 52" stroke="#dccbbd" stroke-width="0.9"/><path d="M99 77 L139 52" stroke="#cfd6e4" stroke-width="0.9"/><path d="M108 77 L148 52" stroke="#dccbbd" stroke-width="0.9"/><path d="M117 77 L157 52" stroke="#cfd6e4" stroke-width="0.9"/></g>
<path d="M0 17 Q18 16 28 26 Q32 36 24 46 Q12 50 0 48Z" fill="#ececec"/>
<path d="M2 20 Q16 20 24 28" fill="none" stroke="#f8f8f8" stroke-width="2"/>
<ellipse cx="50" cy="30" rx="23" ry="5" fill="#e9e9e9"/>
<path d="M33 6 Q33 26 46 27 Q60 26 60 6Z" fill="#fbfbfb"/>
<path d="M33 8 Q33 24 42 26" fill="none" stroke="#e6e6e6" stroke-width="1.2"/>
<path d="M60 10 Q67 9 67 15 Q66 20 59 19" fill="none" stroke="#f2f2f2" stroke-width="2.2"/>
<ellipse cx="46" cy="7.3" rx="12" ry="3.2" fill="#c9a38a"/>
<path d="M22 34 L62 30" stroke="#d8d8d8" stroke-width="1"/>
<rect x="85" y="15" width="21" height="30" rx="3" fill="#f9f9f6"/>
<path d="M86 22 H105" stroke="#ececea" stroke-width="1"/>
<path d="M89 1 Q101 -1 114 3 L115 11 Q101 9 89 11Z" fill="#e6e3df"/>
<path d="M96 16 L104 2" stroke="#d9d4cf" stroke-width="1.2"/>
<ellipse cx="57.6" cy="52.2" rx="34.5" ry="20" fill="#fdfdfd"/>
<path d="M23.5 54 Q27 72 58 72.2 Q89 72 92 54" fill="none" stroke="#e7e7ea" stroke-width="1.2"/>
<ellipse cx="58.8" cy="50.9" rx="27.9" ry="15" fill="#e2d0b6"/>
<ellipse cx="45" cy="51" rx="12" ry="10" fill="#d8c0a0"/>
<ellipse cx="51" cy="50" rx="5" ry="9" fill="#b98455"/>
<circle cx="47" cy="46" r="2" fill="#a9744a"/><circle cx="42" cy="55" r="1.6" fill="#c49a70"/><circle cx="36" cy="50" r="1.5" fill="#c9a57e"/>
<circle cx="55.4" cy="39.5" r="4.5" fill="#2f2230"/>
<circle cx="75.8" cy="47.7" r="5.2" fill="#2a1c29"/>
<circle cx="58.5" cy="59.5" r="5.2" fill="#33202c"/>
<circle cx="81.2" cy="54" r="3.2" fill="#241a24"/>
<circle cx="73.1" cy="40.8" r="2.2" fill="#1f1a26"/>
<circle cx="49.5" cy="64.9" r="1.9" fill="#27304a"/>
<g fill="#c81c30"><circle cx="63.1" cy="39.5" r="2"/><circle cx="67.6" cy="43.1" r="2"/><circle cx="61.3" cy="43.1" r="1.8"/><circle cx="79.4" cy="44.9" r="1.8"/><circle cx="61.3" cy="54" r="1.8"/><circle cx="68.5" cy="54.9" r="2"/><circle cx="66.7" cy="59.5" r="2"/><circle cx="70.4" cy="61.3" r="1.8"/><circle cx="74" cy="62.2" r="1.8"/><circle cx="78.5" cy="56.7" r="1.9"/></g>
<ellipse cx="61" cy="49.5" rx="3.5" ry="2.2" fill="#5aae4c"/><ellipse cx="66" cy="48.5" rx="3.5" ry="2.2" fill="#4fa544"/>
<path d="M106 52 L62 74" stroke="#d5d5d8" stroke-width="1.5"/>
<ellipse cx="104" cy="53" rx="5" ry="3" fill="#ededf0"/>
<ellipse cx="5" cy="57.2" rx="5" ry="4" fill="#58a846"/>
<ellipse cx="111" cy="42.7" rx="5" ry="3.5" fill="#4e9f45"/>
<circle cx="15" cy="51.3" r="3.2" fill="#c25874"/>
<circle cx="74" cy="20.4" r="2.6" fill="#c87585"/><circle cx="80" cy="31.8" r="2.4" fill="#b84a62"/>
</g>
</svg>
<!-- tab icons -->
<svg class="a" style="left:196px;top:141px" width="19" height="19" viewBox="0 0 19 19"><path d="M7 0H12V7H19V12H12V19H7V12H0V7H7Z" fill="#c4c4c4"/></svg>
<svg class="a" style="left:243.6px;top:138.4px" width="24" height="24" viewBox="0 0 24 24"><g fill="#c4c4c4"><rect x="9.7" y="1.5999999999999996" width="4.6" height="5" transform="rotate(0 12 12)"/><rect x="9.7" y="1.5999999999999996" width="4.6" height="5" transform="rotate(45 12 12)"/><rect x="9.7" y="1.5999999999999996" width="4.6" height="5" transform="rotate(90 12 12)"/><rect x="9.7" y="1.5999999999999996" width="4.6" height="5" transform="rotate(135 12 12)"/><rect x="9.7" y="1.5999999999999996" width="4.6" height="5" transform="rotate(180 12 12)"/><rect x="9.7" y="1.5999999999999996" width="4.6" height="5" transform="rotate(225 12 12)"/><rect x="9.7" y="1.5999999999999996" width="4.6" height="5" transform="rotate(270 12 12)"/><rect x="9.7" y="1.5999999999999996" width="4.6" height="5" transform="rotate(315 12 12)"/><path fill-rule="evenodd" d="M12 4A8 8 0 1 1 12 20A8 8 0 1 1 12 4Z M12 7A5 5 0 1 0 12 17A5 5 0 1 0 12 7Z"/></g></svg>
<!-- toolbar icons -->
<svg class="a" style="left:78px;top:85px" width="13" height="13" viewBox="0 0 13 13"><path d="M7 1.5H2.2Q1 1.5 1 2.7V10.8Q1 12 2.2 12H10.3Q11.5 12 11.5 10.8V6" fill="none" stroke="#fff" stroke-width="1.6"/><path d="M4.5 8.5L5 6.2L10.5 0.7L12.3 2.5L6.8 8Z" fill="#fff"/></svg>
<svg class="a" style="left:191px;top:86.5px" width="12" height="10" viewBox="0 0 12 10"><path d="M1 5L4.3 8.3L11 1.3" fill="none" stroke="#2d8a2f" stroke-width="2.6"/></svg>
<svg class="a" style="left:322px;top:85px" width="12" height="12" viewBox="0 0 12 12"><path d="M4.3 0H7.7V4.3H12V7.7H7.7V12H4.3V7.7H0V4.3H4.3Z" fill="#2d8a2f"/></svg>
<svg class="a" style="left:445px;top:84px" width="13" height="14" viewBox="0 0 13 14"><path d="M1 1H6L8 3V9H1Z M5 5H9.5L12 7.5V13H5Z" fill="#eee" stroke="#3c9a3c" stroke-width="1.1"/></svg>
<svg class="a" style="left:579px;top:84px" width="14" height="14" viewBox="0 0 14 14"><circle cx="7" cy="7" r="6.5" fill="#a8141b"/><path d="M4.5 4.5L9.5 9.5M9.5 4.5L4.5 9.5" stroke="#fff" stroke-width="1.9"/></svg>
<svg class="a" style="left:670px;top:86.5px" width="12" height="10" viewBox="0 0 12 10"><path d="M1 5L4.3 8.3L11 1.3" fill="none" stroke="#2d8a2f" stroke-width="2.6"/></svg>
<svg class="a" style="left:1287px;top:84px" width="14" height="14" viewBox="0 0 14 14"><circle cx="7" cy="7" r="6.8" fill="#222"/><text x="7" y="11" font-size="10" font-weight="bold" fill="#fff" text-anchor="middle" font-family="Liberation Sans">?</text></svg>
<!-- header logos -->
<svg class="a" style="left:20px;top:5px" width="60" height="55" viewBox="0 0 60 55">
<defs><linearGradient id="ink" x1="0.2" y1="0.1" x2="0.8" y2="1"><stop offset="0" stop-color="#6b3fa0"/><stop offset="0.55" stop-color="#5b1f86"/><stop offset="1" stop-color="#b02aa8"/></linearGradient></defs>
<path d="M16 24 Q16 15 33 15 Q51 15 51 24 V34 Q51 39.5 44 39.5 H23 Q16 39.5 16 34Z" fill="url(#ink)"/>
<path d="M17 22 Q20 17 33 17 Q47 17 50 22" fill="none" stroke="#8a64b8" stroke-width="1.5" opacity="0.8"/>
<rect x="26.5" y="11.5" width="13" height="6" fill="#5e3390"/>
<ellipse cx="33" cy="10.6" rx="8.5" ry="3.4" fill="#d9cdea"/>
<ellipse cx="33" cy="10.2" rx="5.6" ry="2" fill="#4b2472"/>
<ellipse cx="45" cy="36" rx="5" ry="3" fill="#c03aae" opacity="0.7"/>
<path d="M8 22 Q11 20 14 23 Q24 33 34 39 Q40 42.5 42 45 Q36 46 28 42 Q17 37 10 30 Q6 25 8 22Z" fill="#e9e1ce"/>
<path d="M10 24 Q25 37 41 45 L49 48.5" fill="none" stroke="#bdb29a" stroke-width="1"/>
</svg>
<svg class="a" style="left:1168px;top:6px" width="44" height="44" viewBox="0 0 44 44">
<g fill="none" stroke-width="5.4">
<path d="M8.7 36 Q8.5 30 10 24" stroke="#4f91cd"/>
<path d="M8.7 35.7 Q9 33.5 17.8 33 Q22 31 27.4 24" stroke="#4f91cd"/>
<path d="M19.5 10.6 Q14 8 8.7 8.3 M8.7 8.3 Q10 14 10.4 18.7 Q12 21 19.1 27.4" stroke="#7ac143"/>
<path d="M34.4 20.3 Q35.5 14 35.3 8.3 M35.3 8.3 Q30 9 25.7 10.4 Q23 12 16.6 19.5" stroke="#f9a541"/>
<path d="M24.9 34 Q30 35.5 35.3 35.7 M35.3 35.7 Q34.5 30 34 24.9 Q32 22 24.9 17.4" stroke="#f44321"/>
</g>
<circle cx="8.7" cy="8.3" r="4.6" fill="#7ac143"/><circle cx="35.3" cy="8.3" r="4.6" fill="#f9a541"/><circle cx="8.7" cy="35.7" r="4.6" fill="#4f91cd"/><circle cx="35.3" cy="35.7" r="4.6" fill="#f44321"/>
</svg>
<svg class="a" style="left:1213px;top:13px" width="145" height="30" viewBox="0 0 145 30">
<g fill="none" stroke="#fff" stroke-width="3">
<path d="M1.7 24.8 H8 Q13.5 24.8 13.5 19 V4"/>
<ellipse cx="28.9" cy="18.75" rx="8.85" ry="6.05"/>
<ellipse cx="51.2" cy="18.75" rx="8.85" ry="6.05"/>
<path d="M68 26.3 V18 Q68 12.7 74.5 12.7 Q81.5 12.7 81.5 18 V26.3 M81.5 18 Q81.5 12.7 88 12.7 Q95 12.7 95 18 V26.3"/>
<path d="M101.5 4 V26.3"/>
<ellipse cx="115.1" cy="18.75" rx="8.5" ry="6.05"/>
<path d="M124 11.2 V26.3"/>
</g>
<path d="M128.7 4 H133.5 L132 20 H130.2Z M129.3 22.8 H133 V26.3 H129.3Z" fill="#fff"/>
<circle cx="137.5" cy="7.6" r="1.9" fill="none" stroke="#ccd" stroke-width="0.8"/>
</svg>
<!-- play overlay -->
<svg class="a" style="left:0;top:0" width="1377" height="1061" viewBox="0 0 1377 1061">
<circle cx="699.5" cy="573.3" r="148.2" fill="none" stroke="#b51a1e" stroke-width="20.5"/>
<path d="M653.25 506.35 L653.25 640.3 L766.5 573.3 Z" fill="#b51a1e" stroke="#b51a1e" stroke-width="30" stroke-linejoin="round"/>
<path d="M661.75 521.25 L661.75 625.4 L749.8 573.3 Z" fill="#fff" stroke="#fff" stroke-width="6" stroke-linejoin="round"/>
</svg>
</body></html>
